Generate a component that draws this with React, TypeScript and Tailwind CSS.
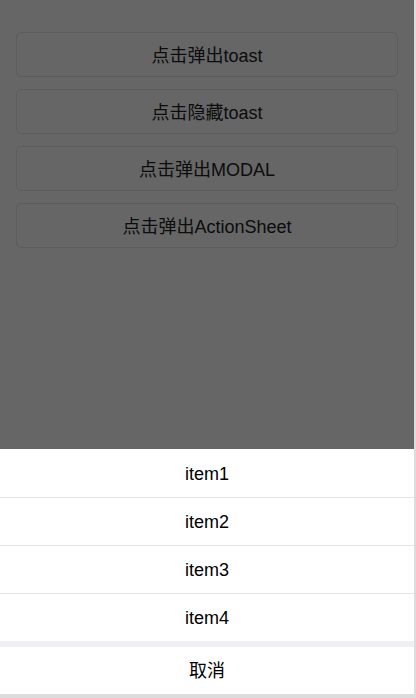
import React from 'react';

const BUTTONS = ['点击弹出toast', '点击隐藏toast', '点击弹出MODAL', '点击弹出ActionSheet'];
const ITEMS = ['item1', 'item2', 'item3', 'item4'];

export default function App() {
  return (
    <div
      className="w-[416px] h-[698px] bg-[#dcdcdc]"
      style={{ fontFamily: '"Liberation Sans", Arial, "Noto Sans CJK SC", sans-serif' }}
    >
      <div className="relative w-[414px] h-[694px] overflow-hidden bg-white">
        {/* Page buttons */}
        <div className="flex flex-col gap-[12px] px-[16px] pt-[32px]">
          {BUTTONS.map((label) => (
            <button
              key={label}
              type="button"
              className="h-[45px] w-full rounded-[5px] border border-[#e5e5e5] bg-white pt-[3px] text-[18px] text-[#222]"
            >
              {label}
            </button>
          ))}
        </div>

        {/* Mask */}
        <div className="absolute inset-0 bg-black/60" />

        {/* Action sheet */}
        <div className="absolute inset-x-0 bottom-0 bg-[#efeff4]">
          <div className="bg-white">
            {ITEMS.map((item, i) => (
              <div
                key={item}
                className={
                  'flex h-[48px] items-center justify-center pt-[2px] text-[18px] text-black' +
                  (i > 0 ? ' border-t border-[#e5e5e5]' : '')
                }
              >
                {item}
              </div>
            ))}
          </div>
          <div className="mt-[6px] flex h-[47px] items-center justify-center bg-white pt-[1px] text-[18px] text-black">
            取消
          </div>
        </div>
      </div>
    </div>
  );
}
